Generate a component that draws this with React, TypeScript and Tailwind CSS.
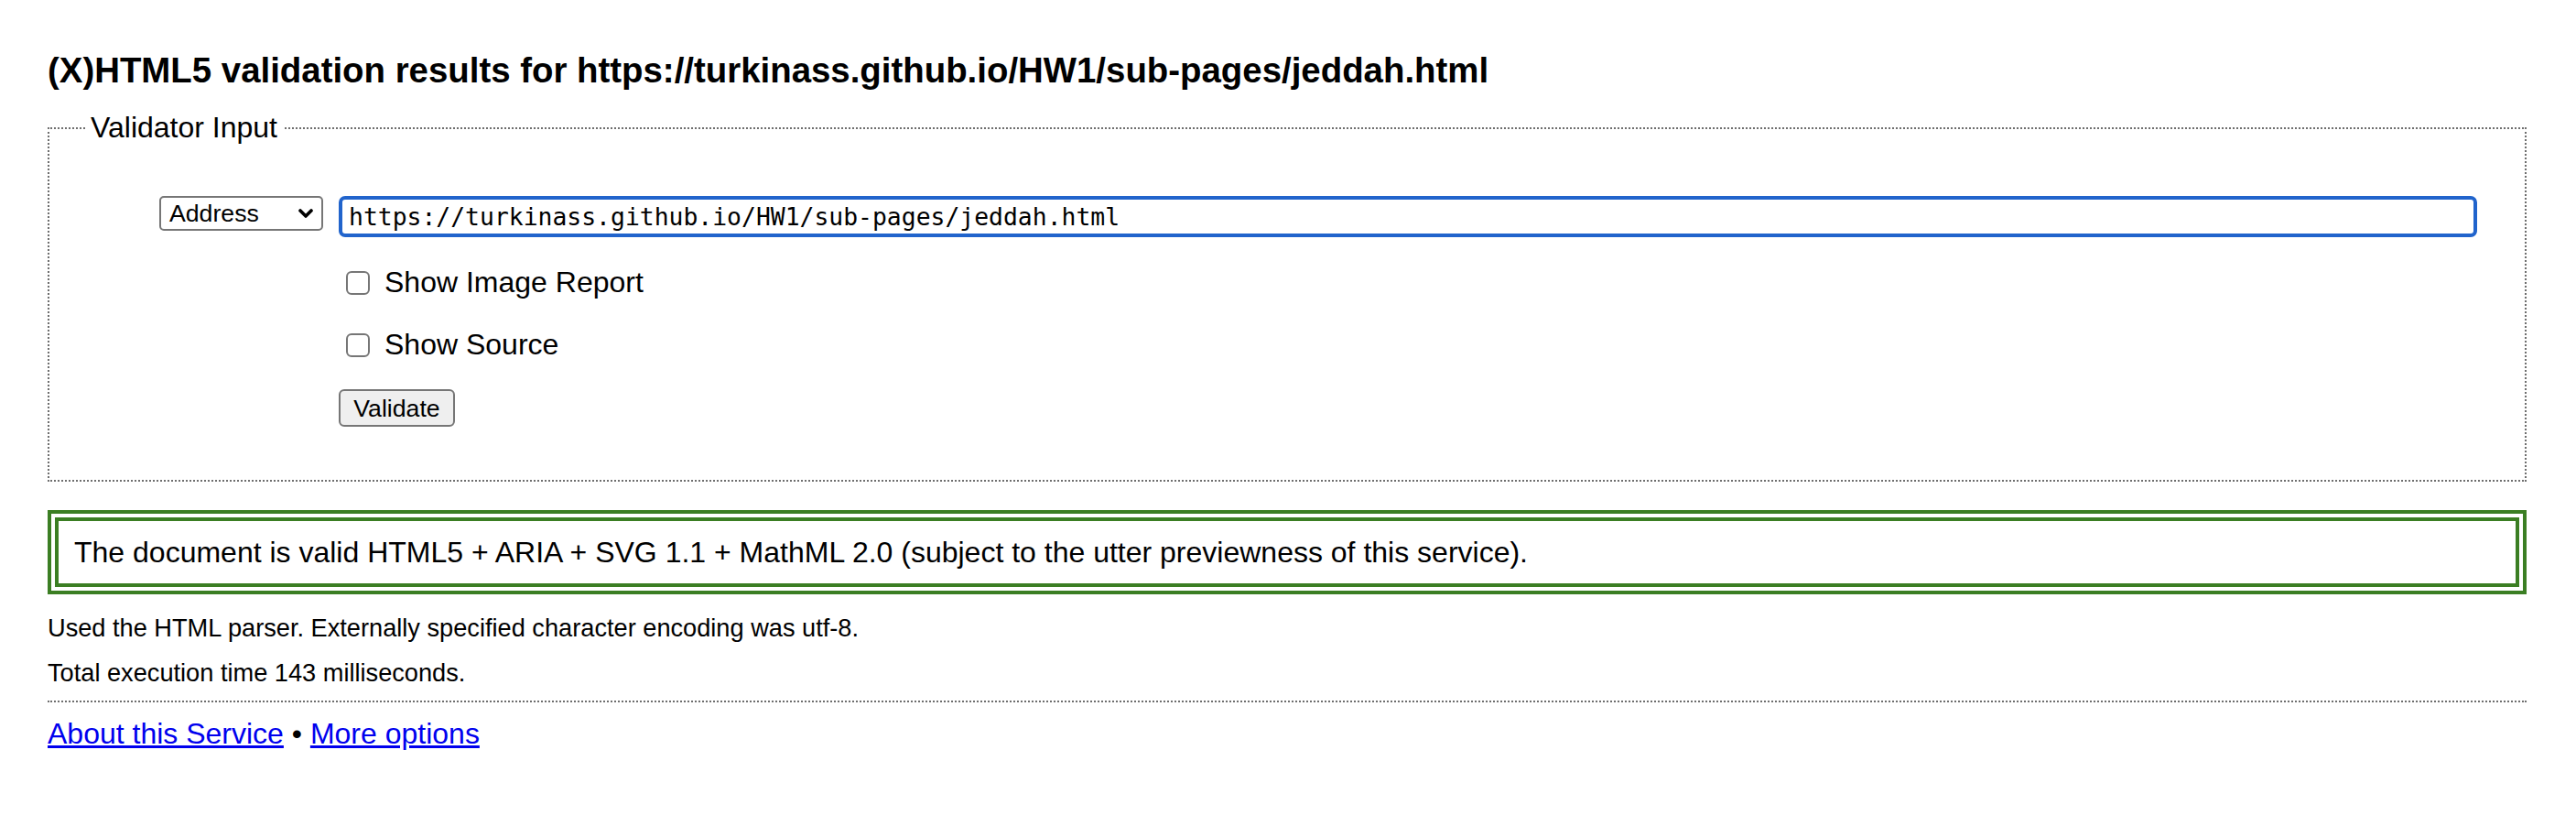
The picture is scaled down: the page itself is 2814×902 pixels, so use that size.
export default function App() {
  return (
    <div className="min-h-screen bg-white text-black font-['Liberation_Sans',Arial,sans-serif] pl-[52px] pr-[54px]">
      <h2 className="pt-[55px] text-[38.4px] leading-[44px] font-bold">
        (X)HTML5 validation results for https://turkinass.github.io/HW1/sub-pages/jeddah.html
      </h2>

      <fieldset className="mt-[22px] border-2 border-dotted border-[#6e6e6e] pb-[58px]">
        <legend className="ml-[39px] px-[6px] text-[32px] leading-[37px]">Validator Input</legend>
        <div className="flex items-start gap-[17px] pl-[120px] pr-[52px] pt-[56px]">
          <div className="w-[179px] h-[38px] flex items-center justify-between border-2 border-[#767676] rounded-[5px] bg-white pl-[9px] pr-[9px]">
            <span className="text-[26.67px] leading-[30px]">Address</span>
            <svg width="16" height="11" viewBox="0 0 16 11" className="mt-[1px]">
              <polyline points="2,2 8,8 14,2" fill="none" stroke="#000" strokeWidth="3.6" strokeLinecap="round" strokeLinejoin="round" />
            </svg>
          </div>
          <div className="flex-1 flex flex-col items-start">
            <div className="w-full h-[45px] flex items-center border-4 border-[#2164cc] rounded-[7px] bg-white pl-[7px]">
              <span className="font-['DejaVu_Sans_Mono',monospace] text-[26.4px] leading-[30px]">
                https://turkinass.github.io/HW1/sub-pages/jeddah.html
              </span>
            </div>
            <label className="mt-[31px] flex items-center h-[37px]">
              <span className="ml-[8px] w-[26px] h-[26px] border-2 border-[#767676] rounded-[6px] bg-white"></span>
              <span className="ml-[16px] text-[32px] leading-[37px]">Show Image Report</span>
            </label>
            <label className="mt-[31px] flex items-center h-[37px]">
              <span className="ml-[8px] w-[26px] h-[26px] border-2 border-[#767676] rounded-[6px] bg-white"></span>
              <span className="ml-[16px] text-[32px] leading-[37px]">Show Source</span>
            </label>
            <button className="mt-[30px] h-[41px] w-[127px] flex items-center justify-center border-2 border-[#767676] rounded-[6px] bg-[#efefef] text-[26.67px] leading-[30px] text-black">
              Validate
            </button>
          </div>
        </div>
      </fieldset>

      <div className="mt-[31px] border-[12px] border-double border-[#3b7e23] px-[17px] py-[15px]">
        <p className="text-[32px] leading-[38px]">
          The document is valid HTML5 + ARIA + SVG 1.1 + MathML 2.0 (subject to the utter previewness of this service).
        </p>
      </div>

      <p className="mt-[21px] text-[27.2px] leading-[32px]">
        Used the HTML parser. Externally specified character encoding was utf-8.
      </p>
      <p className="mt-[17px] text-[27.2px] leading-[32px]">Total execution time 143 milliseconds.</p>

      <div className="mt-[14px] border-t-2 border-dotted border-[#6e6e6e]"></div>

      <p className="mt-[16px] text-[32px] leading-[37px]">
        <a href="#" className="text-[#0000ee] underline">About this Service</a>
        {" \u2022 "}
        <a href="#" className="text-[#0000ee] underline">More options</a>
      </p>
    </div>
  );
}
